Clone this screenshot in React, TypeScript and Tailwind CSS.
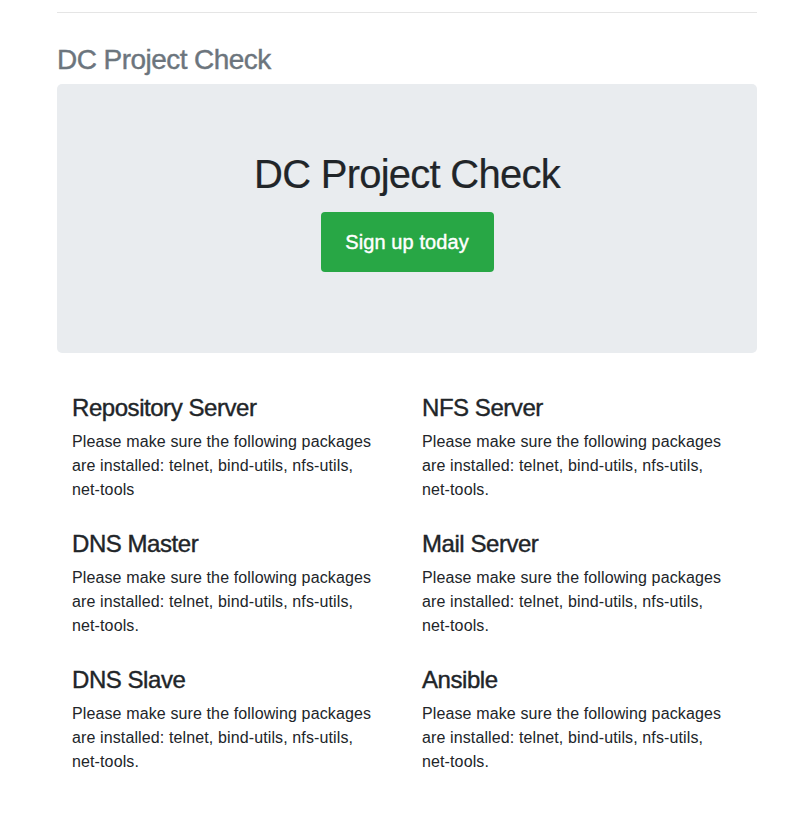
import React from 'react';

const SERVERS = [
  { name: 'Repository Server', end: '' },
  { name: 'NFS Server', end: '.' },
  { name: 'DNS Master', end: '.' },
  { name: 'Mail Server', end: '.' },
  { name: 'DNS Slave', end: '.' },
  { name: 'Ansible', end: '.' },
];

export default function App() {
  return (
    <div className="min-h-screen bg-white font-['Liberation_Sans',Arial,sans-serif] text-[#212529]">
      <div className="ml-[57px] w-[700px] pt-3">
        <hr className="border-0 border-t border-[#e5e5e5]" />

        {/* Title */}
        <h3 className="mt-[30px] mb-[7px] text-[28px] leading-[34px] font-normal text-[#6c757d] tracking-[-0.55px] [-webkit-text-stroke:0.4px_#6c757d]">
          DC Project Check
        </h3>

        {/* Jumbotron */}
        <div className="bg-[#e9ecef] rounded-[5px] h-[269px] pt-[66px] flex flex-col items-center">
          <h1 className="text-[40px] leading-[48px] font-normal tracking-[-0.75px] [-webkit-text-stroke:0.2px_#212529]">DC Project Check</h1>
          <a
            href="#"
            className="mt-[14px] w-[173px] h-[60px] flex items-center justify-center rounded-[4px] bg-[#28a745] text-white text-[20px] font-normal tracking-[0.1px] [-webkit-text-stroke:0.4px_#ffffff]"
          >
            Sign up today
          </a>
        </div>

        {/* Servers */}
        <div className="grid grid-cols-2 mt-[40px]">
          {SERVERS.map((s) => (
            <div key={s.name} className="px-[15px] h-[136px]">
              <h4 className="text-[24px] leading-[29px] font-normal mb-[8px] tracking-[-0.45px] [-webkit-text-stroke:0.4px_#212529]">
                {s.name}
              </h4>
              <p className="text-[16px] leading-[24px] tracking-[0.12px]">
                Please make sure the following packages are installed: telnet, bind-utils, nfs-utils,{' '}
                <span className="whitespace-nowrap">net-tools{s.end}</span>
              </p>
            </div>
          ))}
        </div>
      </div>
    </div>
  );
}
